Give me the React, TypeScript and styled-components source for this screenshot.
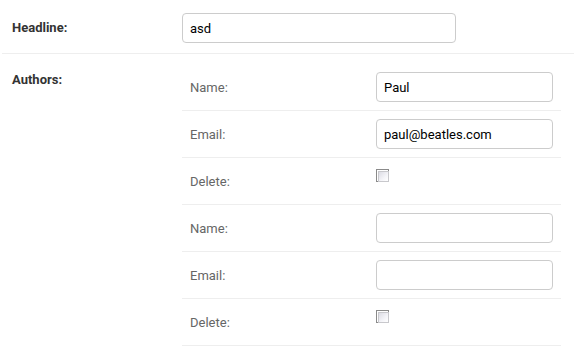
import React from "react";
import styled, { createGlobalStyle } from "styled-components";

const Global = createGlobalStyle`
  html, body { margin: 0; padding: 0; background: #fff; }
  body { font-family: Roboto, "Liberation Sans", Arial, sans-serif; }
  * { box-sizing: border-box; }
`;

const Form = styled.div`
  width: 574px;
  padding-left: 2px;
`;

const OuterRow = styled.div<{ $last?: boolean }>`
  display: grid;
  grid-template-columns: 170px 1fr;
  border-bottom: ${(p) => (p.$last ? "none" : "1px solid #eee")};
`;

const OuterLabel = styled.div<{ $top?: boolean }>`
  padding: ${(p) => (p.$top ? "18px 10px 10px" : "13px 10px 10px")};
  font-size: 13px;
  font-weight: bold;
  color: #333;
  line-height: 16px;
  display: flex;
  align-items: ${(p) => (p.$top ? "flex-start" : "center")};
`;

const OuterValue = styled.div<{ $pt: number }>`
  padding: ${(p) => p.$pt}px 13px 10px 10px;
`;

const Input = styled.input<{ $w: number }>`
  display: block;
  width: ${(p) => p.$w}px;
  height: 30px;
  border: 1px solid #ccc;
  border-radius: 4px;
  padding: 0 7px;
  font-family: Roboto, "Liberation Sans", Arial, sans-serif;
  font-size: 13px;
  color: #000;
  outline: none;
  background: #fff;
`;

const Inner = styled.div`
  width: 379px;
`;

const InnerRow = styled.div<{ $first?: boolean }>`
  display: grid;
  grid-template-columns: 186px 193px;
  border-top: ${(p) => (p.$first ? "none" : "1px solid #eee")};
`;

const InnerLabel = styled.div`
  padding: 8px;
  min-height: 46px;
  display: flex;
  align-items: center;
  font-size: 13px;
  color: #666;
`;

const InnerValue = styled.div`
  padding: 8px 8px 8px 8px;
  display: flex;
  align-items: flex-start;
`;

const Check = styled.span`
  display: block;
  width: 13px;
  height: 13px;
  margin-top: 3px;
  border: 1px solid #8a8a8a;
  background: #fff;
  padding: 1px;
  &::after {
    content: "";
    display: block;
    width: 100%;
    height: 100%;
    background: linear-gradient(135deg, #dcdce4 0%, #f4f4f8 60%, #ffffff 100%);
    border: 1px solid #c8c8cc;
  }
`;

type Author = { name: string; email: string };
const authors: Author[] = [
  { name: "Paul", email: "paul@beatles.com" },
  { name: "", email: "" },
];

export default function App() {
  return (
    <>
      <Global />
      <Form>
        <OuterRow>
          <OuterLabel>Headline:</OuterLabel>
          <OuterValue $pt={13}>
            <Input $w={274} defaultValue="asd" />
          </OuterValue>
        </OuterRow>
        <OuterRow $last>
          <OuterLabel $top>Authors:</OuterLabel>
          <OuterValue $pt={10}>
            <Inner>
              {authors.map((a, i) => (
                <React.Fragment key={i}>
                  <InnerRow $first={i === 0}>
                    <InnerLabel>Name:</InnerLabel>
                    <InnerValue>
                      <Input $w={177} defaultValue={a.name} />
                    </InnerValue>
                  </InnerRow>
                  <InnerRow>
                    <InnerLabel>Email:</InnerLabel>
                    <InnerValue>
                      <Input $w={177} defaultValue={a.email} />
                    </InnerValue>
                  </InnerRow>
                  <InnerRow>
                    <InnerLabel>Delete:</InnerLabel>
                    <InnerValue>
                      <Check />
                    </InnerValue>
                  </InnerRow>
                </React.Fragment>
              ))}
              <InnerRow />
            </Inner>
          </OuterValue>
        </OuterRow>
      </Form>
    </>
  );
}
